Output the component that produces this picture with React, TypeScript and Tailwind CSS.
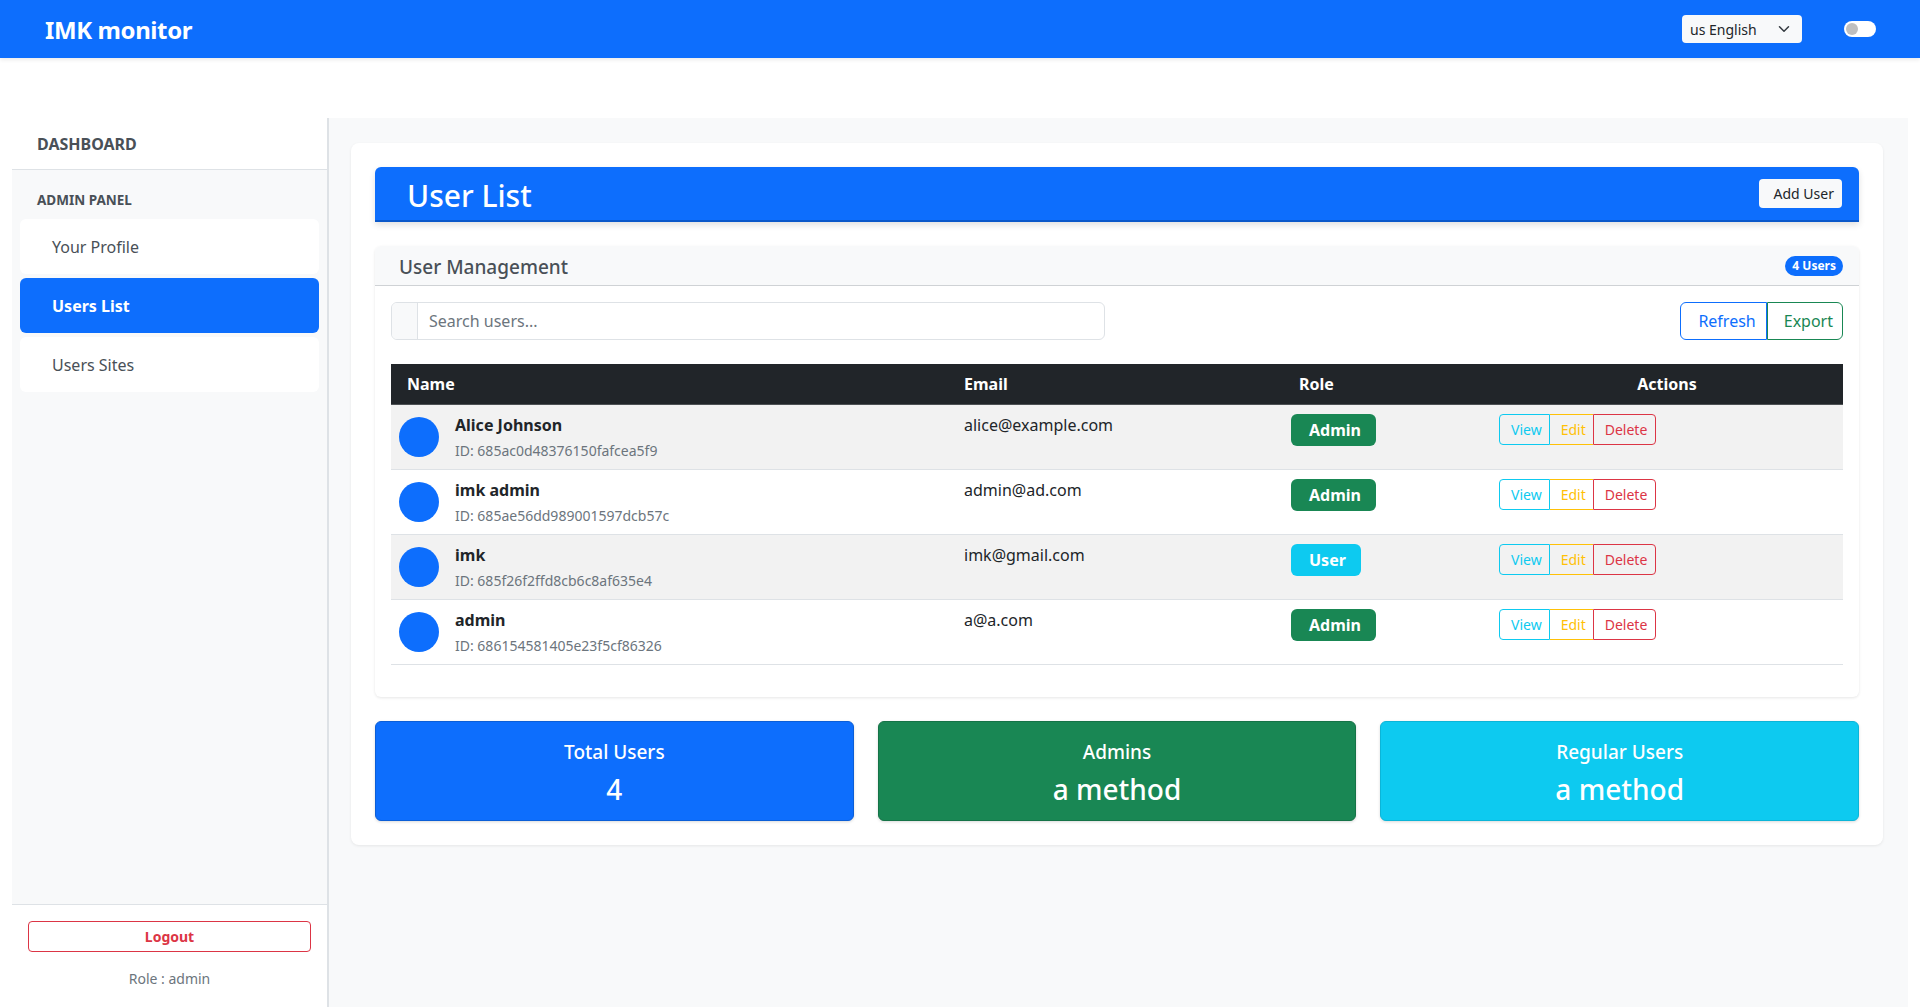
import React from 'react'

type User = {
  name: string
  id: string
  email: string
  role: 'Admin' | 'User'
}

const users: User[] = [
  { name: 'Alice Johnson', id: '685ac0d48376150fafcea5f9', email: 'alice@example.com', role: 'Admin' },
  { name: 'imk admin', id: '685ae56dd989001597dcb57c', email: 'admin@ad.com', role: 'Admin' },
  { name: 'imk', id: '685f26f2ffd8cb6c8af635e4', email: 'imk@gmail.com', role: 'User' },
  { name: 'admin', id: '686154581405e23f5cf86326', email: 'a@a.com', role: 'Admin' },
]

const NavBar = () => {
  return (
    <div className="h-[58px] shrink-0 bg-[#0d6efd] flex items-center justify-between pl-[45px] pr-[44px] shadow-[0_2px_4px_rgba(0,0,0,0.08)] relative z-10">
      <div className="text-white font-bold text-[24px] tracking-[-0.4px] leading-none pt-[2px]">IMK monitor</div>
      <div className="flex items-center gap-[42px]">
        <div className="w-[120px] h-[28px] bg-[#f8f9fa] rounded-[4px] flex items-center justify-between pl-2 pr-3 text-[14px] text-[#212529]">
          <span>us English</span>
          <svg width="12" height="12" viewBox="0 0 16 16" fill="none" stroke="#343a40" strokeWidth="2" strokeLinecap="round" strokeLinejoin="round">
            <path d="M2 5l6 6 6-6" />
          </svg>
        </div>
        <div className="w-[32px] h-[16px] bg-white rounded-full flex items-center px-[2px]">
          <div className="w-[12px] h-[12px] rounded-full bg-[#bfbfbf]" />
        </div>
      </div>
    </div>
  )
}

const SideBar = () => {
  return (
    <div className="w-[317px] shrink-0 flex flex-col border-r-2 border-[#dee2e6] bg-[#f8f9fa]">
      <div className="bg-white border-b border-[#dee2e6] px-[25px] pt-[17px] pb-[15px] text-[16px] leading-[19px] font-bold text-[#495057]">
        DASHBOARD
      </div>
      <div className="flex-1 px-2 pt-[21px]">
        <div className="px-[17px] text-[13.5px] font-bold text-[#495057] leading-[19px] mb-[9px]">ADMIN PANEL</div>
        <div className="flex flex-col gap-[4px]">
          <div className="h-[55px] bg-white rounded-[6px] flex items-center pl-[32px] text-[16px] text-[#495057]">Your Profile</div>
          <div className="h-[55px] bg-[#0d6efd] rounded-[6px] flex items-center pl-[32px] text-[16px] font-bold text-white">Users List</div>
          <div className="h-[55px] bg-white rounded-[6px] flex items-center pl-[32px] text-[16px] text-[#495057]">Users Sites</div>
        </div>
      </div>
      <div className="bg-white border-t border-[#dee2e6] pt-[16px] pb-[18px] px-[16px] flex flex-col items-center">
        <button className="w-full h-[31px] border border-[#dc3545] rounded-[4px] text-[#dc3545] text-[14px] font-bold">Logout</button>
        <div className="mt-[16px] text-[14px] leading-[21px] text-[#6c757d]">Role : admin</div>
      </div>
    </div>
  )
}

const RoleBadge = ({ role }: { role: User['role'] }) => {
  if (role === 'Admin') {
    return <span className="inline-block h-[32px] leading-[32px] pl-[18px] pr-[15px] rounded-[6px] bg-[#198754] text-white font-bold text-[16px]">Admin</span>
  }
  return <span className="inline-block h-[32px] leading-[32px] pl-[18px] pr-[15px] rounded-[6px] bg-[#0dcaf0] text-white font-bold text-[16px]">User</span>
}

const Actions = () => {
  return (
    <div className="inline-flex h-[31px] text-[14px]">
      <button className="pl-[11px] pr-[7px] border border-[#0dcaf0] text-[#0dcaf0] rounded-l-[4px]">View</button>
      <button className="pl-[11px] pr-[7px] border-y border-[#ffc107] text-[#ffc107]">Edit</button>
      <button className="pl-[11px] pr-[8px] border border-[#dc3545] text-[#dc3545] rounded-r-[4px]">Delete</button>
    </div>
  )
}

const UserTable = () => {
  return (
    <table className="w-full table-fixed border-collapse text-[16px] text-[#212529]">
      <thead>
        <tr className="bg-[#212529] text-white border-b border-[#4d5154]">
          <th className="w-[565px] text-left font-bold px-4 py-2 leading-6">Name</th>
          <th className="w-[327px] text-left font-bold px-2 py-2 leading-6">Email</th>
          <th className="w-[208px] text-left font-bold pl-4 pr-2 py-2 leading-6">Role</th>
          <th className="text-center font-bold px-2 py-2 leading-6">Actions</th>
        </tr>
      </thead>
      <tbody>
        {users.map((u, i) => (
          <tr key={u.id} className={i % 2 === 0 ? 'bg-[#f2f2f2] border-b border-[#dee2e6]' : 'bg-white border-b border-[#dee2e6]'}>
            <td className="px-2 py-2 align-top">
              <div className="flex items-center">
                <div className="w-[40px] h-[40px] rounded-full bg-[#0d6efd] shrink-0" />
                <div className="ml-[16px]">
                  <div className="font-bold leading-6 mb-[3px]">{u.name}</div>
                  <div className="text-[14px] leading-[21px] text-[#6c757d]">ID: {u.id}</div>
                </div>
              </div>
            </td>
            <td className="px-2 pt-[8px] align-top leading-6">{u.email}</td>
            <td className="px-2 pt-[9px] align-top">
              <RoleBadge role={u.role} />
            </td>
            <td className="px-2 pt-[9px] align-top">
              <Actions />
            </td>
          </tr>
        ))}
      </tbody>
    </table>
  )
}

const StatCard = ({ title, value, color }: { title: string; value: string; color: string }) => {
  return (
    <div className={`${color} flex-1 h-[100px] rounded-[6px] shadow-[0_1px_3px_rgba(0,0,0,0.15)] flex flex-col items-center pt-[18px] text-white`}>
      <div className="text-[19px] leading-[24px] font-medium">{title}</div>
      <div className="mt-[8px] text-[28px] leading-[34px] font-medium">{value}</div>
    </div>
  )
}

export default function App() {
  return (
    <div className="h-screen flex flex-col bg-white font-[family-name:'Noto_Sans',sans-serif] text-[#212529]">
      <NavBar />
      <div className="flex-1 min-h-0 flex pt-[60px] px-3">
        <SideBar />
        <div className="flex-1 bg-[#f8f9fa] pl-[22px] pr-[25px] pt-[25px]">
          <div className="bg-white rounded-[8px] shadow-[0_1px_3px_rgba(0,0,0,0.08)] p-6">
            <div className="h-[55px] bg-[#0d6efd] rounded-t-[6px] flex items-center justify-between pl-[32px] pr-[17px] shadow-[0_3px_6px_rgba(0,0,0,0.12)] border-b-2 border-[#0a58ca]">
              <div className="text-white text-[30px] font-medium leading-none pt-[5px]">User List</div>
              <button className="h-[29px] bg-[#f8f9fa] rounded-[4px] pl-[15px] pr-[8px] text-[14px] text-[#212529]">Add User</button>
            </div>

            <div className="mt-6 rounded-[6px] shadow-[0_1px_3px_rgba(0,0,0,0.1)] bg-white">
              <div className="h-[40px] bg-[#f8f9fa] rounded-t-[6px] border-b border-[#cfd2d5] flex items-center justify-between pl-[24px] pr-[16px]">
                <div className="text-[19px] font-medium text-[#495057] pt-[3px]">User Management</div>
                <span className="h-[20px] px-[7px] rounded-full bg-[#0d6efd] text-white text-[12px] font-bold flex items-center">4 Users</span>
              </div>
              <div className="p-4 pb-[32px]">
                <div className="flex items-center justify-between mb-6">
                  <div className="flex w-[714px] h-[38px] border border-[#dee2e6] rounded-[6px] overflow-hidden">
                    <div className="w-[26px] bg-[#f8f9fa] border-r border-[#dee2e6]" />
                    <input className="flex-1 px-[11px] text-[16px] outline-none placeholder:text-[#6c757d]" placeholder="Search users..." />
                  </div>
                  <div className="flex h-[38px] text-[16px]">
                    <button className="pl-[17px] pr-[10px] border border-[#0d6efd] text-[#0d6efd] rounded-l-[6px]">Refresh</button>
                    <button className="pl-[16px] pr-[9px] border border-[#198754] text-[#198754] rounded-r-[6px]">Export</button>
                  </div>
                </div>
                <UserTable />
              </div>
            </div>

            <div className="flex gap-6 mt-6">
              <StatCard title="Total Users" value="4" color="bg-[#0d6efd] border border-[#0b5ed7]" />
              <StatCard title="Admins" value="a method" color="bg-[#198754] border border-[#157347]" />
              <StatCard title="Regular Users" value="a method" color="bg-[#0dcaf0] border border-[#0bb5d8]" />
            </div>
          </div>
        </div>
      </div>
    </div>
  )
}
